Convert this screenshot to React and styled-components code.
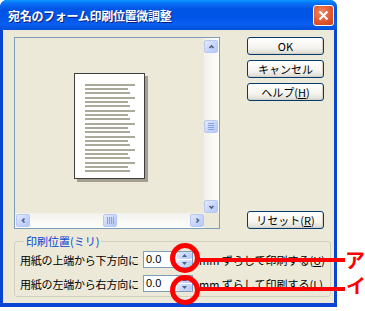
import React from "react";
import styled, { createGlobalStyle } from "styled-components";

const GlobalStyle = createGlobalStyle`
  html, body {
    margin: 0;
    padding: 0;
    background: #ffffff;
  }
  body {
    font-family: "Noto Sans CJK JP", "Noto Sans", sans-serif;
  }
`;

const Page = styled.div`
  position: relative;
  width: 365px;
  height: 311px;
  overflow: hidden;
  background: #ffffff;
`;

const Window = styled.div`
  width: 337px;
  height: 307px;
  display: flex;
  flex-direction: column;
  border-radius: 7px 7px 0 0;
  background: #0a45d2;
  overflow: hidden;
`;

const TitleBar = styled.div`
  height: 30px;
  flex: none;
  display: flex;
  align-items: center;
  justify-content: space-between;
  padding: 0 3px 0 8px;
  background: linear-gradient(
    to bottom,
    #0997ff 0%,
    #0a6ff6 12%,
    #0055e5 30%,
    #0055e8 60%,
    #0a5ff2 80%,
    #0050d8 100%
  );
`;

const Title = styled.span`
  color: #ffffff;
  font-size: 12px;
  font-weight: bold;
  letter-spacing: -0.3px;
  text-shadow: 1px 1px 0 #0a1f7d;
`;

const CloseButton = styled.div`
  width: 19px;
  height: 19px;
  border: 1px solid #ffffff;
  border-radius: 3px;
  background: radial-gradient(circle at 40% 35%, #f08a66 0%, #e0552b 60%, #c7401c 100%);
  display: flex;
  align-items: center;
  justify-content: center;
`;

const Body = styled.div`
  flex: 1;
  margin: 0 3px 4px 3px;
  background: #ece9d8;
  padding: 7px 9px 0 11px;
  display: flex;
  flex-direction: column;
`;

const TopRow = styled.div`
  display: flex;
  gap: 27px;
`;

const Preview = styled.div`
  width: 204px;
  height: 190px;
  border: 1px solid #7f9db9;
  display: grid;
  grid-template-columns: 1fr 15px;
  grid-template-rows: 1fr 15px;
`;

const Canvas = styled.div`
  display: flex;
  align-items: center;
  justify-content: center;
  background: #ece9d8;
`;

const Paper = styled.div`
  width: 59px;
  height: 94px;
  background: #ffffff;
  border: 1px solid #404040;
  box-shadow: 3px 3px 0 #a09f90;
  padding: 10px 0 0 10px;
  display: flex;
  flex-direction: column;
  gap: 3px;
`;

const LineGroup = styled.div`
  display: flex;
  flex-direction: column;
  gap: 2px;
`;

const TextLine = styled.div`
  height: 2px;
  flex: none;
  width: ${({ $w }) => $w}px;
  background: #aaa99a;
`;

const ScrollBar = styled.div`
  display: flex;
  flex-direction: ${({ $vertical }) => ($vertical ? "column" : "row")};
  align-items: center;
  padding: ${({ $vertical }) => ($vertical ? "2px 1px 0 0" : "0 0 1px 1px")};
  background: ${({ $vertical }) =>
    $vertical
      ? "linear-gradient(to right, #f3f1ec, #fefefb)"
      : "linear-gradient(to bottom, #f3f1ec, #fefefb)"};
`;

const Track = styled.div`
  flex: 1;
  align-self: stretch;
  display: flex;
  align-items: center;
  justify-content: center;
`;

const ScrollButton = styled.div`
  width: 14px;
  height: 13px;
  flex: none;
  border: 1px solid #b8c8f0;
  border-radius: 2px;
  background: linear-gradient(135deg, #e1eafe 0%, #c4d3fb 60%, #b4c8f6 100%);
  display: flex;
  align-items: center;
  justify-content: center;
  box-sizing: border-box;
`;

const Corner = styled.div`
  background: #ece9d8;
`;

const ButtonColumn = styled.div`
  display: flex;
  flex-direction: column;
  gap: 5px;
  width: 77px;
`;

const Button = styled.div`
  box-sizing: border-box;
  height: 18px;
  border: 1px solid #003c74;
  border-radius: 3px;
  background: linear-gradient(to bottom, #ffffff 0%, #f5f4ef 60%, #dcdbd2 100%);
  box-shadow: inset -1px -1px 0 #d6d0c5;
  display: flex;
  align-items: center;
  justify-content: center;
  font-size: 11px;
  color: #000000;
  line-height: 1;
  margin-top: ${({ $push }) => ($push ? "auto" : "0")};
`;

const Underline = styled.span`
  text-decoration: underline;
`;

const Group = styled.fieldset`
  margin: 6px 0 0 0;
  width: 311px;
  box-sizing: border-box;
  border: 1px solid #d0d0bf;
  border-radius: 3px;
  padding: 3px 5px 4px 5px;
  display: flex;
  flex-direction: column;
  gap: 7px;
`;

const Legend = styled.legend`
  color: #0046d5;
  font-size: 11px;
  line-height: 13px;
  padding: 0 2px;
  margin-left: 4px;
`;

const Row = styled.div`
  display: flex;
  align-items: center;
  height: 17px;
  font-size: 11px;
  color: #000000;
`;

const RowLabel = styled.span`
  width: 123px;
  white-space: nowrap;
  letter-spacing: -0.2px;
`;

const Field = styled.div`
  width: 50px;
  height: 17px;
  box-sizing: border-box;
  border: 1px solid #7f9db9;
  background: #ffffff;
  display: flex;
  align-items: stretch;
`;

const FieldValue = styled.span`
  flex: 1;
  padding-left: 2px;
  font-family: "Liberation Sans", "Noto Sans", sans-serif;
  font-size: 11px;
  line-height: 15px;
`;

const Spin = styled.div`
  width: 15px;
  display: flex;
  flex-direction: column;
  gap: 1px;
`;

const SpinHalf = styled.div`
  flex: 1;
  border-radius: 2px;
  background: linear-gradient(135deg, #e1eafe 0%, #c4d3fb 60%, #b4c8f6 100%);
  display: flex;
  align-items: center;
  justify-content: center;
`;

const Suffix = styled.span`
  margin-left: 6px;
  white-space: nowrap;
`;

const Circle = styled.div`
  position: absolute;
  left: 170px;
  top: ${({ $top }) => $top}px;
  width: 30px;
  height: 30px;
  box-sizing: border-box;
  border: 5px solid #ff0000;
  border-radius: 50%;
`;

const Pointer = styled.div`
  position: absolute;
  left: 199px;
  top: ${({ $top }) => $top}px;
  width: 146px;
  height: 4px;
  background: #ff0000;
`;

const Mark = styled.span`
  position: absolute;
  left: ${({ $left }) => $left}px;
  top: ${({ $top }) => $top}px;
  color: #ff0000;
  font-size: 20px;
  font-weight: bold;
  line-height: 20px;
`;

const Arrow = ({ dir, size = 7 }) => {
  const paths = {
    up: "M1.5 5 L3.5 3 L5.5 5",
    down: "M1.5 3 L3.5 5 L5.5 3",
    left: "M4.5 1.5 L2.5 3.5 L4.5 5.5",
    right: "M2.5 1.5 L4.5 3.5 L2.5 5.5",
  };
  return (
    <svg width={size} height={size} viewBox="0 0 7 7">
      <path d={paths[dir]} fill="none" stroke="#4d6185" strokeWidth="1.6" />
    </svg>
  );
};

const SmallArrow = ({ dir }) => (
  <svg width="5" height="3" viewBox="0 0 5 3">
    <path d={dir === "up" ? "M0 3 L2.5 0 L5 3 Z" : "M0 0 L2.5 3 L5 0 Z"} fill="#4d6185" />
  </svg>
);

const Grip = ({ vertical }) => (
  <svg width="8" height="7" viewBox="0 0 8 7">
    {[0, 2, 4, 6].map((i) =>
      vertical ? (
        <line key={i} x1="1" x2="7" y1={i + 0.5} y2={i + 0.5} stroke="#8aa2e0" strokeWidth="1" />
      ) : (
        <line key={i} y1="0" y2="7" x1={i + 1.5} x2={i + 1.5} stroke="#8aa2e0" strokeWidth="1" />
      )
    )}
  </svg>
);

const lineGroups = [0, 1, 2, 3, 4, 5, 6];

function App() {
  return (
    <Page>
      <GlobalStyle />
      <Window>
        <TitleBar>
          <Title>宛名のフォーム印刷位置微調整</Title>
          <CloseButton>
            <svg width="11" height="11" viewBox="0 0 11 11">
              <path d="M1.5 1.5 L9.5 9.5 M9.5 1.5 L1.5 9.5" stroke="#ffffff" strokeWidth="2" />
            </svg>
          </CloseButton>
        </TitleBar>
        <Body>
          <TopRow>
            <Preview>
              <Canvas>
                <Paper>
                  {lineGroups.map((g) => (
                    <LineGroup key={g}>
                      <TextLine $w={50} />
                      <TextLine $w={43} />
                      <TextLine $w={45} />
                    </LineGroup>
                  ))}
                </Paper>
              </Canvas>
              <ScrollBar $vertical>
                <ScrollButton>
                  <Arrow dir="up" />
                </ScrollButton>
                <Track>
                  <ScrollButton>
                    <Grip vertical />
                  </ScrollButton>
                </Track>
                <ScrollButton>
                  <Arrow dir="down" />
                </ScrollButton>
              </ScrollBar>
              <ScrollBar>
                <ScrollButton>
                  <Arrow dir="left" />
                </ScrollButton>
                <Track>
                  <ScrollButton>
                    <Grip />
                  </ScrollButton>
                </Track>
                <ScrollButton>
                  <Arrow dir="right" />
                </ScrollButton>
              </ScrollBar>
              <Corner />
            </Preview>
            <ButtonColumn>
              <Button>OK</Button>
              <Button>キャンセル</Button>
              <Button>
                ヘルプ(<Underline>H</Underline>)
              </Button>
              <Button $push>
                リセット(<Underline>R</Underline>)
              </Button>
            </ButtonColumn>
          </TopRow>
          <Group>
            <Legend>印刷位置(ミリ)</Legend>
            <Row>
              <RowLabel>用紙の上端から下方向に</RowLabel>
              <Field>
                <FieldValue>0.0</FieldValue>
                <Spin>
                  <SpinHalf>
                    <SmallArrow dir="up" />
                  </SpinHalf>
                  <SpinHalf>
                    <SmallArrow dir="down" />
                  </SpinHalf>
                </Spin>
              </Field>
              <Suffix>
                mm ずらして印刷する(<Underline>U</Underline>)
              </Suffix>
            </Row>
            <Row>
              <RowLabel>用紙の左端から右方向に</RowLabel>
              <Field>
                <FieldValue>0.0</FieldValue>
                <Spin>
                  <SpinHalf>
                    <SmallArrow dir="up" />
                  </SpinHalf>
                  <SpinHalf>
                    <SmallArrow dir="down" />
                  </SpinHalf>
                </Spin>
              </Field>
              <Suffix>
                mm ずらして印刷する(<Underline>L</Underline>)
              </Suffix>
            </Row>
          </Group>
        </Body>
      </Window>
      <Circle $top={243} />
      <Circle $top={275} />
      <Pointer $top={258} />
      <Pointer $top={287} />
      <Mark $left={345} $top={250}>ア</Mark>
      <Mark $left={346} $top={276}>イ</Mark>
    </Page>
  );
}

export default App;
